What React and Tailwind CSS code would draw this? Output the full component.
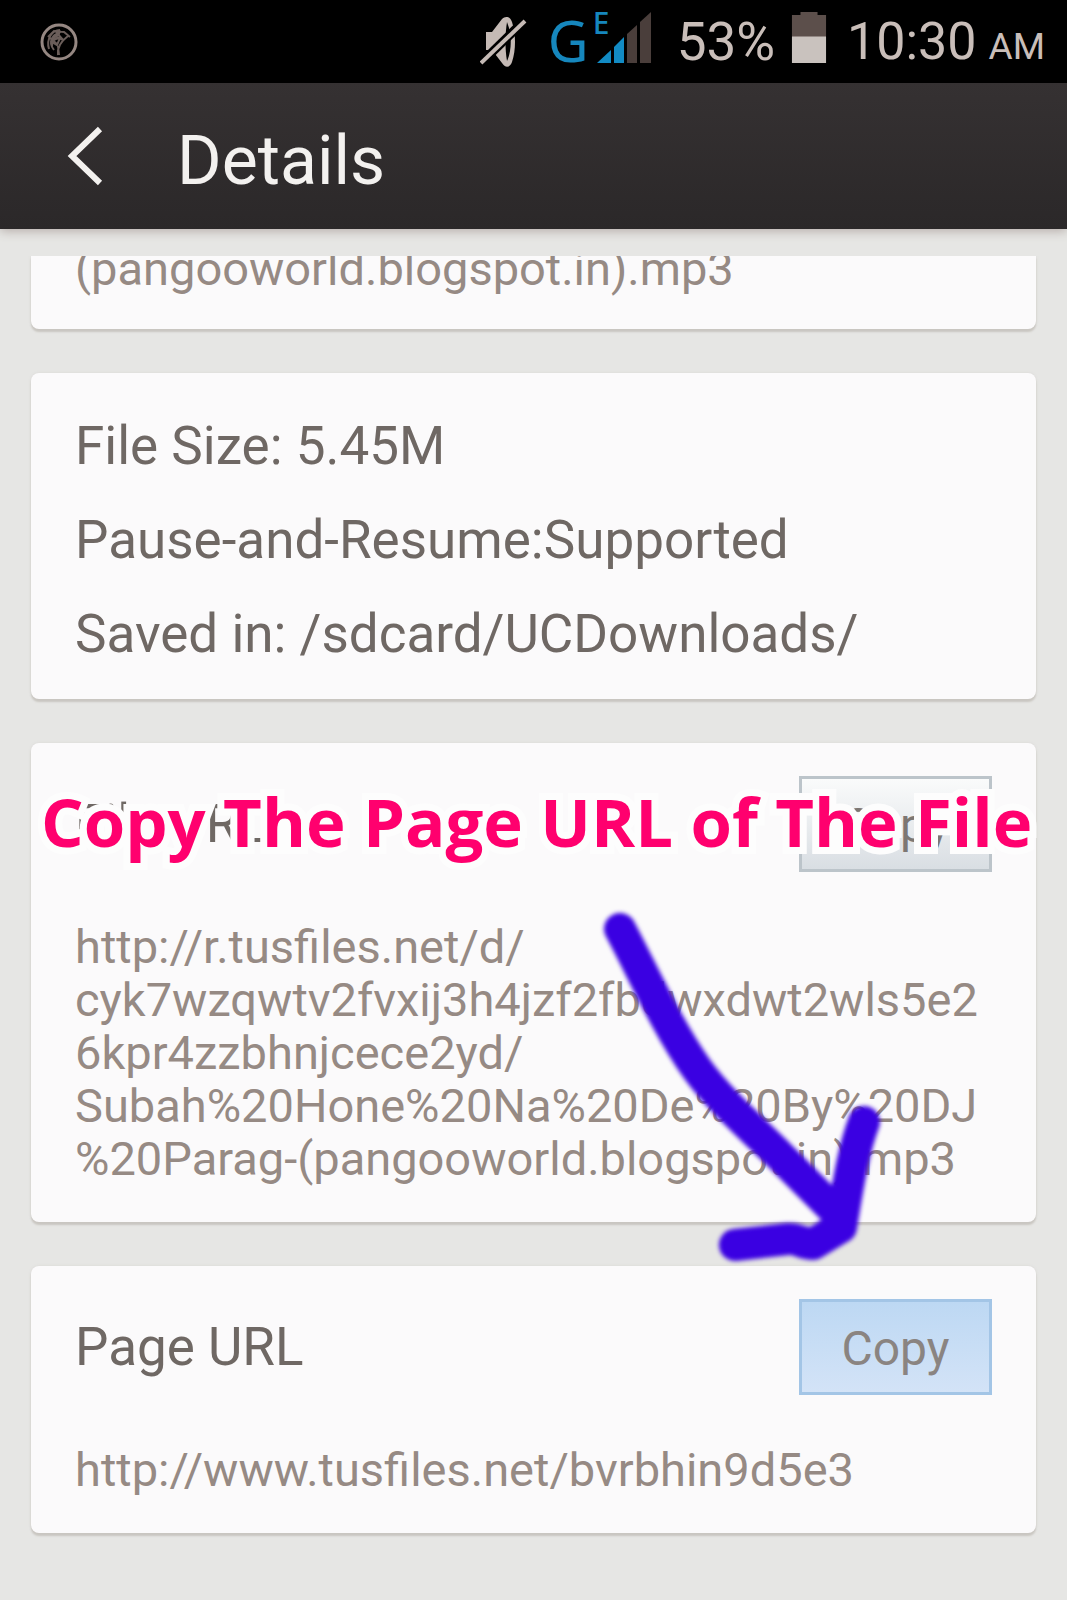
const URL_LINES = [
  'http://r.tusfiles.net/d/',
  'cyk7wzqwtv2fvxij3h4jzf2fbdwxdwt2wls5e2',
  '6kpr4zzbhnjcece2yd/',
  'Subah%20Hone%20Na%20De%20By%20DJ',
  '%20Parag-(pangooworld.blogspot.in).mp3',
];

const FILE_INFO = [
  'File Size: 5.45M',
  'Pause-and-Resume:Supported',
  'Saved in: /sdcard/UCDownloads/',
];

function GlobeIcon() {
  return (
    <svg width="38" height="40" viewBox="0 0 38 40" fill="none" stroke="#6b5e5a" strokeWidth="2">
      <circle cx="19" cy="20" r="17" strokeWidth="3" stroke="#958782" />
      <path d="M9 27C6 17 12 8 20 8M14 28C7 19 14 11 20 12M18 33C17 26 20 20 28 14M12 24C12 17 17 15 23 18M8 15L14 9L24 10L30 15M10 16L17 22M16 10L24 19M19 33L18 24M11 19L21 9" />
      <path d="M14 14L20 16L17 23L12 20Z" />
    </svg>
  );
}

function MutedIcon() {
  return (
    <svg width="48" height="56" viewBox="0 0 48 56" fill="none">
      <path d="M6 18H12L22 5C25 2 30 2 32 8C36 20 36 36 32 48C30 54 25 54 22 49L12 36H6Z" fill="#c5bab5" />
      <path d="M27 8C32 20 32 36 27 47C25 36 25 20 27 8Z" fill="#000" />
      <path d="M1 49L44 7" stroke="#000" strokeWidth="9" />
      <path d="M1 49L45 7" stroke="#c5bab5" strokeWidth="4" />
    </svg>
  );
}

function Signal() {
  return (
    <div className="flex items-center gap-2 font-['Noto_Sans'] text-[#1687bd]">
      <span className="pb-1 text-[56px] leading-[64px]">G</span>
      <div className="relative pb-2">
        <svg width="56" height="52" viewBox="0 0 56 52">
          <path d="M0 51L14 38V51Z" fill="#128bc4" />
          <path d="M17 35L27 25V51H17Z" fill="#128bc4" />
          <path d="M30 22L40 13V51H30Z" fill="#4a3e3b" />
          <path d="M43 10L54 0V51H43Z" fill="#4a3e3b" />
        </svg>
        <span className="absolute -top-1 -left-1 text-[30px] leading-[30px] font-medium">E</span>
      </div>
    </div>
  );
}

function BatteryIcon() {
  return (
    <svg width="36" height="52" viewBox="0 0 38 53" preserveAspectRatio="none">
      <path d="M1 3H10V0H28V3H37V26H1Z" fill="#5c4f4b" />
      <path d="M1 25H37V52H1Z" fill="#c9c2be" />
    </svg>
  );
}

function StatusBar() {
  return (
    <div className="relative z-10 flex h-[83px] items-center bg-black pr-[22px] pl-10 text-[#c9beb9]">
      <GlobeIcon />
      <div className="ml-auto flex items-center">
        <MutedIcon />
        <div className="ml-5">
          <Signal />
        </div>
        <span className="ml-6 text-[53px] leading-[64px]">53%</span>
        <div className="mr-5 ml-4 pb-2">
          <BatteryIcon />
        </div>
        <div className="flex items-baseline gap-3 pt-1.5 leading-[64px]">
          <span className="text-[52px]">10:30</span>
          <span className="text-[37px]">AM</span>
        </div>
      </div>
    </div>
  );
}

function Card({ className = '', children }) {
  return (
    <section
      className={`relative rounded-lg bg-[#fbfafb] px-11 shadow-[0_3px_2px_#c9c6c1,0_0_3px_#d8d7d4] ${className}`}
    >
      {children}
    </section>
  );
}

function UrlCard({ title, lines, buttonClass, children }) {
  return (
    <Card className="pt-[33px] pb-[37px]">
      <div className="flex items-center justify-between">
        <h2 className="text-[53px] leading-[96px] text-[#6f6864]">{title}</h2>
        <button type="button" className={`h-24 w-[193px] border-3 pt-1 text-[48px] ${buttonClass}`}>
          Copy
        </button>
      </div>
      <p className="mt-12 text-[47px] leading-[53px] whitespace-nowrap text-[#968a84]">
        {lines.map((line) => (
          <span key={line} className="block">{line}</span>
        ))}
      </p>
      {children}
    </Card>
  );
}

// Hand-drawn arrow pointing at the second Copy button
function Arrow() {
  return (
    <svg
      className="pointer-events-none absolute top-[158px] right-[136px] z-10 blur-[2px]"
      width="300"
      height="360"
      viewBox="600 900 300 360"
      fill="none"
      stroke="#3a00e2"
      strokeWidth="32"
      strokeLinecap="round"
      strokeLinejoin="round"
    >
      <path d="M620 928C640 965 667 1026 697 1068C720 1100 755 1130 780 1155L837 1212" />
      <path d="M864 1121C853 1150 848 1185 841 1226L813 1243C802 1243 798 1237 788 1238L735 1244" />
    </svg>
  );
}

export default function App() {
  return (
    <div className="min-h-screen bg-[#e6e6e4] font-['Roboto',sans-serif]">
      <StatusBar />
      <header className="flex h-[146px] items-center bg-linear-to-b from-[#353132] to-[#2b2829] pl-[65px] shadow-[0_2px_10px_#b5aca8]">
        <button type="button" aria-label="Back" className="text-[#f3f1ef]">
          <svg width="40" height="60" viewBox="0 0 40 60" fill="none" stroke="currentColor" strokeWidth="6">
            <path d="M35 3L7 30L35 57" />
          </svg>
        </button>
        <h1 className="pt-2.5 pl-[72px] text-[68px] leading-[80px] text-[#f3f1ef]">Details</h1>
      </header>

      <main className="flex flex-col gap-11 px-[31px] pt-[27px] pb-[60px]">
        <Card className="flex h-[73px] items-end rounded-t-none pb-[34px] [clip-path:inset(0_-6px_-8px)]">
          <p className="text-[47px] leading-[53px] text-[#968a84]">(pangooworld.blogspot.in).mp3</p>
        </Card>

        <Card className="pt-[26px] pb-[18px]">
          {FILE_INFO.map((line) => (
            <p key={line} className="text-[53px] leading-[94px] text-[#6f6864]">{line}</p>
          ))}
        </Card>

        <UrlCard
          title="File URL"
          lines={URL_LINES}
          buttonClass="border-[#bcc4ca] bg-linear-to-b from-[#fafbfb] to-[#d9dee3] text-[#7d7773]"
        >
          <div className="absolute top-[30px] left-2.5 z-10 font-['Open_Sans'] text-[67px] leading-[96px] font-bold whitespace-nowrap text-[#ff006e] [-webkit-text-stroke:14px_#fdfdfd] [paint-order:stroke]">
            Copy The Page URL of The File
          </div>
          <Arrow />
        </UrlCard>

        <UrlCard
          title="Page URL"
          lines={['http://www.tusfiles.net/bvrbhin9d5e3']}
          buttonClass="border-[#a3c5e6] bg-linear-to-b from-[#bdd8f3] to-[#d3e3f7] text-[#8a8481]"
        />
      </main>
    </div>
  );
}
